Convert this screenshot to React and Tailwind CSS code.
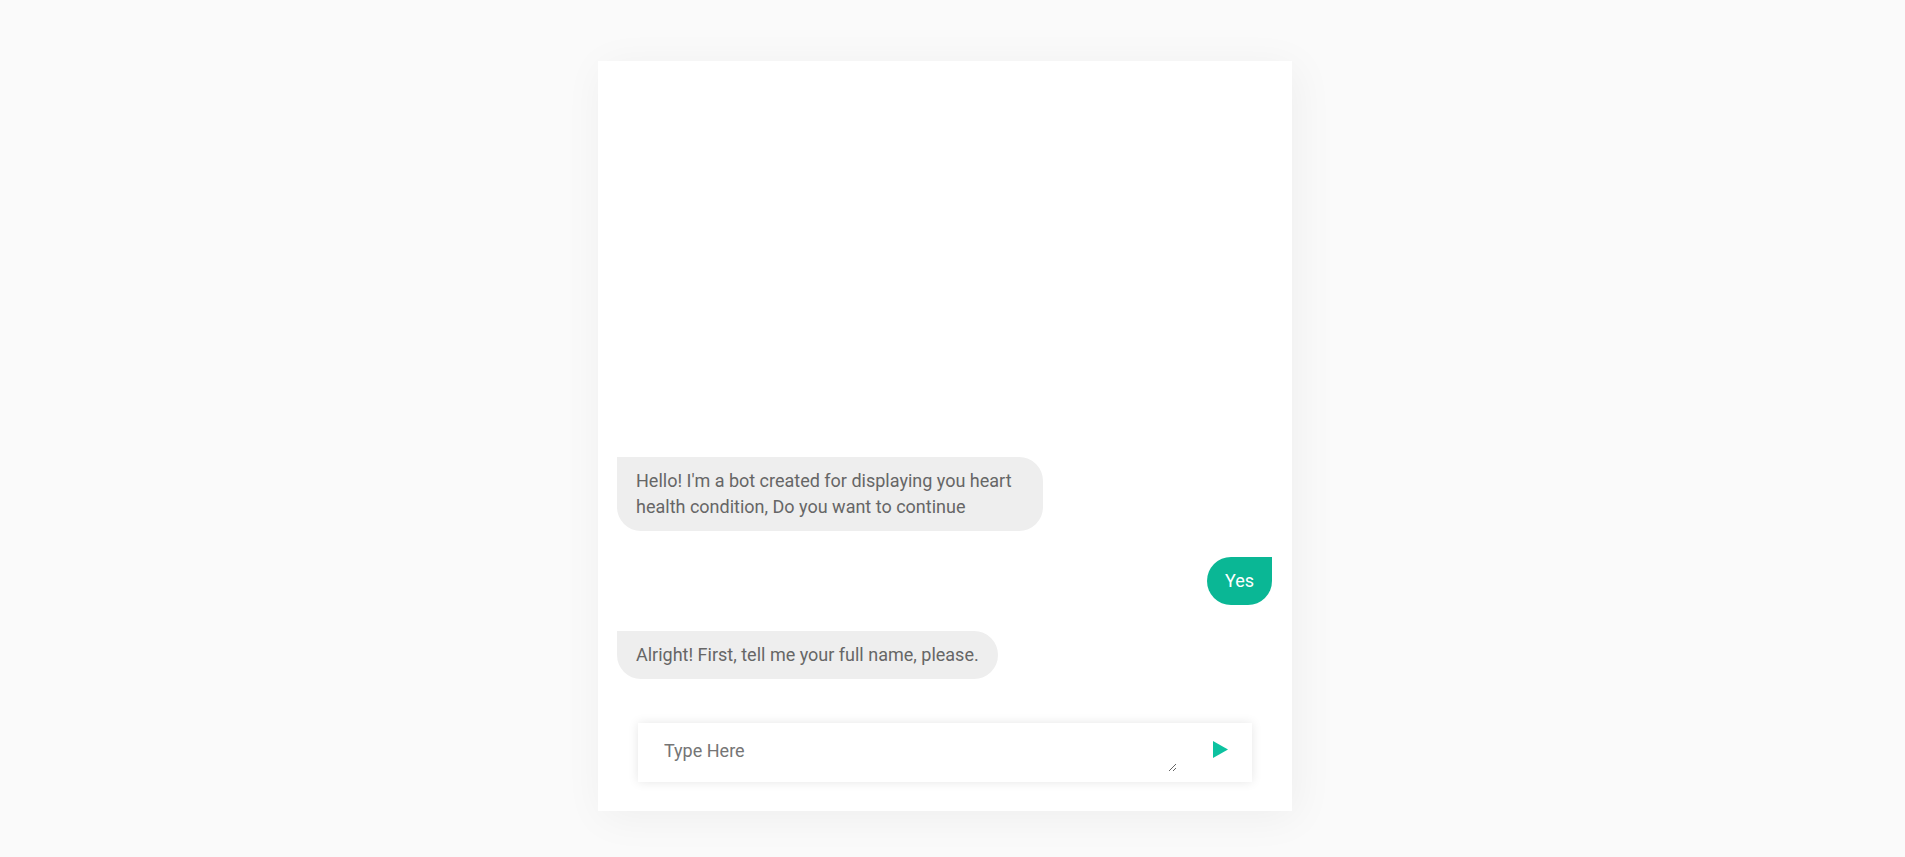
import React from "react";

const messages = [
  { from: "bot", text: "Hello! I'm a bot created for displaying you heart health condition, Do you want to continue" },
  { from: "user", text: "Yes" },
  { from: "bot", text: "Alright! First, tell me your full name, please." },
];

const Bubble = ({ from, text }) => {
  if (from === "user") {
    return (
      <div className="flex justify-end">
        <div className="bg-[#0ab795] text-white text-[18px] leading-[26px] px-[18px] py-[11px] rounded-[24px] rounded-tr-none">
          {text}
        </div>
      </div>
    );
  }
  return (
    <div className="flex justify-start">
      <div className="max-w-[426px] bg-[#eeeeee] text-[#666666] text-[18px] leading-[26px] px-[19px] py-[11px] rounded-[24px] rounded-tl-none">
        {text}
      </div>
    </div>
  );
};

export default function App() {
  return (
    <div
      className="min-h-[857px] bg-[#fafafa] flex justify-center pr-[15px] pt-[61px]"
      style={{ fontFamily: "Roboto, 'Noto Sans', sans-serif" }}
    >
      <div className="w-[694px] h-[750px] bg-white shadow-[4px_6px_40px_rgba(0,0,0,0.05)] flex flex-col justify-end px-[19px] pb-[29px]">
        {/* Messages */}
        <div className="flex flex-col gap-[26px] pr-[1px]">
          {messages.map((m, i) => (
            <Bubble key={i} from={m.from} text={m.text} />
          ))}
        </div>

        {/* Input */}
        <div className="mt-[44px] mx-[21px] h-[59px] bg-white shadow-[0_0_10px_rgba(0,0,0,0.1)] flex items-start pl-[26px] pr-[24px]">
          <textarea
            autoFocus
            placeholder="Type Here"
            className="flex-1 mt-[17px] h-[32px] p-0 border-0 outline-none text-[18px] leading-[21px] text-[#444] placeholder:text-[#757575] bg-transparent"
            style={{ fontFamily: "Roboto, 'Noto Sans', sans-serif" }}
          ></textarea>
          <button className="ml-[36px] mt-[18px] flex cursor-pointer">
            <svg className="block" width="15" height="17" viewBox="0 0 15 17">
              <polygon points="0,0 15,8.5 0,17" fill="#0cc2a0" />
            </svg>
          </button>
        </div>
      </div>
    </div>
  );
}
